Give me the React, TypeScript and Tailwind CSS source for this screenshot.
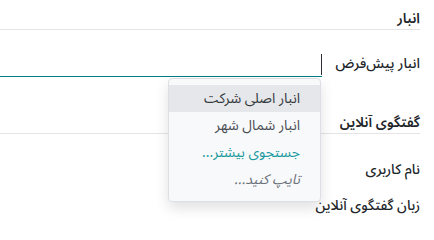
const FONT = { fontFamily: '"Noto Sans Arabic", "DejaVu Sans", sans-serif' };

const options = ["انبار اصلی شرکت", "انبار شمال شهر"];

export default function App() {
  return (
    <div
      dir="rtl"
      className="relative h-[232px] w-[434px] overflow-hidden bg-white text-[14px] text-[#212529]"
      style={FONT}
    >
      <div className="pr-[14px]">
        {/* section: warehouse */}
        <div className="flex h-[30px] items-end border-b border-[#e4e4e4] font-semibold leading-[20px]">
          انبار
        </div>
        <div className="flex h-[47px] items-end">
          <div className="w-[98px] shrink-0 pb-[3px] font-medium">انبار پیش‌فرض</div>
          <div className="relative h-[23px] flex-1 border-b-[1.5px] border-[#017e84]">
            <span className="absolute right-0 top-0 h-[21px] w-[1.5px] bg-[#2b2f33]" />
          </div>
        </div>

        {/* section: live chat */}
        <div className="flex h-[57px] items-end border-b border-[#e4e4e4] font-semibold leading-[20px]">
          گفتگوی آنلاین
        </div>
        <div className="flex h-[46px] items-end font-medium">نام کاربری</div>
        <div className="flex h-[38px] items-end pb-[2px] font-medium">زبان گفتگوی آنلاین</div>
      </div>

      {/* autocomplete menu */}
      <div className="absolute left-[168px] top-[78px] w-[153px] rounded-[4px] border border-[#dcdfe3] bg-[#f8f9fa] pb-[8px] pt-[6px] shadow-[0_6px_14px_rgba(0,0,0,0.12)]">
        {options.map((o, i) => (
          <div
            key={o}
            className={
              i === 0
                ? "flex h-[27px] items-center bg-[#e6e7ea] pr-[20px] text-[#34393e]"
                : "flex h-[27px] items-center pr-[20px] text-[#4a4f55]"
            }
          >
            {o}
          </div>
        ))}
        <div className="flex h-[27px] items-center pr-[20px] text-[#1a9a9f]">جستجوی بیشتر...</div>
        <div className="flex h-[27px] items-center pr-[20px] italic text-[#6c737a]">تایپ کنید...</div>
      </div>
    </div>
  );
}
